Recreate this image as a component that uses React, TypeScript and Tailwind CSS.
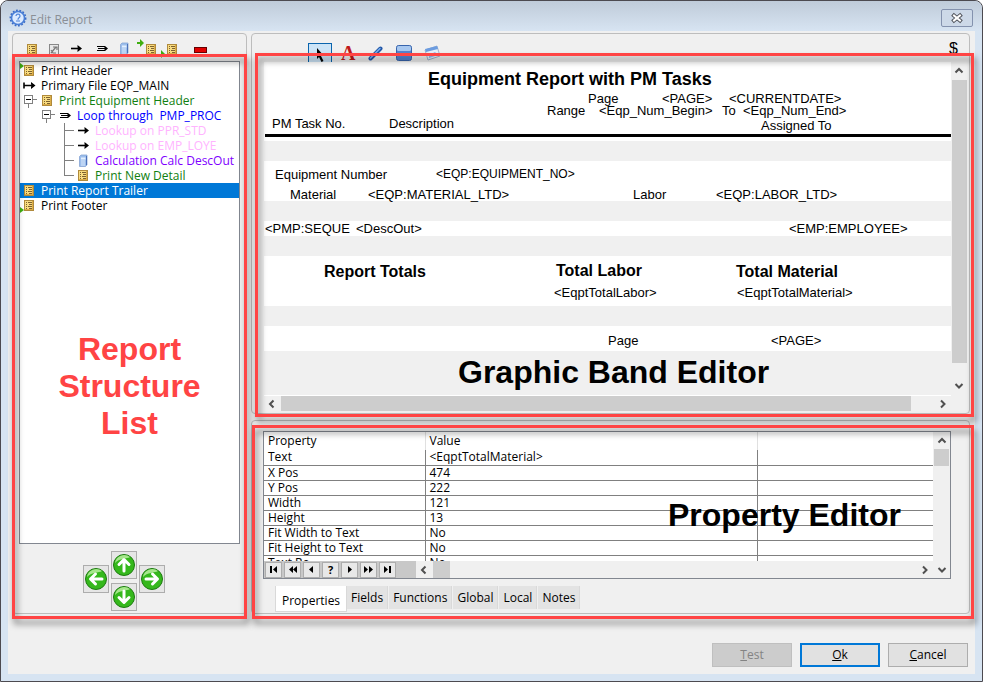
import React, { useState } from 'react';
import clsx from 'clsx';

type IconName = 'band' | 'file' | 'lookup' | 'loop' | 'calc';

interface TreeRow {
  label: string;
  icon: IconName;
  level: number;
  color?: string;
  expander?: boolean;
  last?: boolean;
  marker?: 'top' | 'bottom';
}

const treeRows: TreeRow[] = [
  { label: 'Print Header', icon: 'band', level: 0, marker: 'top' },
  { label: 'Primary File EQP_MAIN', icon: 'file', level: 0 },
  { label: 'Print Equipment Header', icon: 'band', level: 1, expander: true, color: 'text-[#108010]' },
  { label: 'Loop through  PMP_PROC', icon: 'loop', level: 2, expander: true, color: 'text-[#0000ff]' },
  { label: 'Lookup on PPR_STD', icon: 'lookup', level: 3, color: 'text-[#ffb4ff]' },
  { label: 'Lookup on EMP_LOYE', icon: 'lookup', level: 3, color: 'text-[#ffb4ff]' },
  { label: 'Calculation Calc DescOut', icon: 'calc', level: 3, color: 'text-[#8000ff]' },
  { label: 'Print New Detail', icon: 'band', level: 3, last: true, color: 'text-[#108010]' },
  { label: 'Print Report Trailer', icon: 'band', level: 0 },
  { label: 'Print Footer', icon: 'band', level: 0, marker: 'bottom' },
];

interface Band {
  height: string;
  white?: boolean;
  fields?: { text: string; place: string; style?: string }[];
}

const bands: Band[] = [
  {
    height: 'h-[79px]',
    white: true,
    fields: [
      { text: 'Equipment Report with PM Tasks', place: 'left-[164px] top-[7px]', style: 'text-lg leading-5 font-bold' },
      { text: 'Page', place: 'left-[324px] top-[29px]' },
      { text: '<PAGE>', place: 'left-[398px] top-[29px]' },
      { text: '<CURRENTDATE>', place: 'left-[465px] top-[29px]' },
      { text: 'Range', place: 'left-[283px] top-[41px]' },
      { text: '<Eqp_Num_Begin>', place: 'left-[335px] top-[41px]' },
      { text: 'To', place: 'left-[458px] top-[41px]' },
      { text: '<Eqp_Num_End>', place: 'left-[479px] top-[41px]' },
      { text: 'PM Task No.', place: 'left-[8px] top-[54px]' },
      { text: 'Description', place: 'left-[125px] top-[54px]' },
      { text: 'Assigned To', place: 'left-[497px] top-[56px]' },
    ],
  },
  { height: 'h-5' },
  {
    height: 'h-10',
    white: true,
    fields: [
      { text: 'Equipment Number', place: 'left-[11px] top-[6px]' },
      { text: '<EQP:EQUIPMENT_NO>', place: 'left-[172px] top-[5px]', style: 'text-xs leading-4' },
      { text: 'Material', place: 'left-[26px] top-[26px]' },
      { text: '<EQP:MATERIAL_LTD>', place: 'left-[104px] top-[26px]' },
      { text: 'Labor', place: 'left-[369px] top-[26px]' },
      { text: '<EQP:LABOR_LTD>', place: 'left-[452px] top-[26px]' },
    ],
  },
  { height: 'h-5' },
  {
    height: 'h-[15px]',
    white: true,
    fields: [
      { text: '<PMP:SEQUE', place: 'left-[1px] top-0' },
      { text: '<DescOut>', place: 'left-[92px] top-0' },
      { text: '<EMP:EMPLOYEE>', place: 'left-[525px] top-0' },
    ],
  },
  { height: 'h-5' },
  {
    height: 'h-[50px]',
    white: true,
    fields: [
      { text: 'Report Totals', place: 'left-[60px] top-[6px]', style: 'text-base leading-5 font-bold' },
      { text: 'Total Labor', place: 'left-[292px] top-[5px]', style: 'text-base leading-5 font-bold' },
      { text: 'Total Material', place: 'left-[472px] top-[6px]', style: 'text-base leading-5 font-bold' },
      { text: '<EqptTotalLabor>', place: 'left-[290px] top-[29px]' },
      { text: '<EqptTotalMaterial>', place: 'left-[473px] top-[29px]' },
    ],
  },
  { height: 'h-5' },
  {
    height: 'h-[25px]',
    white: true,
    fields: [
      { text: 'Page', place: 'left-[344px] top-[7px]' },
      { text: '<PAGE>', place: 'left-[507px] top-[7px]' },
    ],
  },
  { height: 'h-11' },
];

const properties = [
  ['Text', '<EqptTotalMaterial>'],
  ['X Pos', '474'],
  ['Y Pos', '222'],
  ['Width', '121'],
  ['Height', '13'],
  ['Fit Width to Text', 'No'],
  ['Fit Height to Text', 'No'],
  ['Text Ro', 'No'],
];

const tabs = ['Properties', 'Fields', 'Functions', 'Global', 'Local', 'Notes'];

const BandIcon = () => (
  <svg width="12" height="12" viewBox="0 0 12 12" shapeRendering="crispEdges">
    <rect x="1" y="0" width="10" height="11" fill="#b08a3c" />
    <rect x="2" y="1" width="8" height="9" fill="#f8dc80" />
    <path d="M9 1h1v9H9zM2 9h8v1H2z" fill="#dcae48" />
    <path d="M3 2h1v1H3zM5 2h4v1H5zM3 4h1v1H3zM6 4h3v1H6zM3 6h1v1H3zM5 6h4v1H5zM3 8h1v1H3zM6 8h3v1H6z" fill="#7c6030" />
  </svg>
);

const LookupIcon = () => (
  <svg width="13" height="9" viewBox="0 0 13 9">
    <path d="M1 4.500h9" stroke="#000" strokeWidth="1.600" />
    <path d="M7.500 1l4.500 3.500L7.500 8V5.500L9 4.500 7.500 3.500z" fill="#000" />
  </svg>
);

const FileIcon = () => (
  <svg width="13" height="9" viewBox="0 0 13 9">
    <path d="M1 4.500h9M1 1.500v6" stroke="#000" strokeWidth="1.600" />
    <path d="M8 1l4.500 3.500L8 8V5.500L9.500 4.500 8 3.500z" fill="#000" />
  </svg>
);

const LoopIcon = () => (
  <svg width="13" height="9" viewBox="0 0 13 9">
    <path d="M1 2h7M2 4h9M1 6h7" transform="translate(0 .5)" stroke="#000" strokeWidth="1" shapeRendering="crispEdges" />
    <path d="M7 2h2l3 2.500L9 7H7l2.500-2.500z" fill="#000" />
  </svg>
);

const CalcIcon = () => (
  <svg width="12" height="13" viewBox="0 0 12 13">
    <path d="M2.500 2.500L4 1h6v10l-1.500 1.500h-6z" fill="#9cbeec" stroke="#86a4d4" strokeWidth=".8" />
    <path d="M4 3.500h4.500v2H4z" fill="#e4f0ff" />
    <path d="M4 7h4M4 9h4M4 11h4" stroke="#dceafc" strokeWidth="1" />
    <path d="M9.500 2v9" stroke="#4a70b8" strokeWidth="1" />
  </svg>
);

const icons: Record<IconName, React.FC> = {
  band: BandIcon,
  file: FileIcon,
  lookup: LookupIcon,
  loop: LoopIcon,
  calc: CalcIcon,
};

const ToolBand: React.FC<{ arrow: string }> = ({ arrow }) => (
  <svg width="22" height="20" viewBox="0 0 22 20">
    <g transform="translate(8 6)">
      <BandIcon />
    </g>
    <path d={arrow} fill="#3fae10" />
  </svg>
);

const Chevron: React.FC<{ dir: 'up' | 'down' | 'left' | 'right' }> = ({ dir }) => {
  const paths = {
    up: 'M1.500 6.500L5 3l3.500 3.500',
    down: 'M1.500 3L5 6.500 8.500 3',
    left: 'M6.500 1.500L3 5l3.500 3.500',
    right: 'M3 1.500L6.500 5 3 8.500',
  };
  return (
    <svg width="10" height="10" viewBox="0 0 10 10">
      <path d={paths[dir]} fill="none" stroke="#505050" strokeWidth="2" />
    </svg>
  );
};

const MoveButton: React.FC<{ label: string; path: string }> = ({ label, path }) => (
  <button aria-label={label} className="flex h-7 w-[26px] items-center justify-center border border-[#adadad] bg-[#e6e6e6]">
    <svg width="24" height="24" viewBox="0 0 24 24" className="shrink-0">
      <circle cx="12" cy="12" r="10.500" fill="#35b81c" stroke="#1d7a10" strokeWidth="1" />
      <path d="M3 10a9.300 9.300 0 0 1 15-6c-3 2-11 1-15 6z" fill="#a6e68c" />
      <path d={path} fill="none" stroke="#fff" strokeWidth="3" strokeLinecap="round" strokeLinejoin="round" />
    </svg>
  </button>
);

const TreeItem: React.FC<{ row: TreeRow; selected: boolean; onSelect: () => void }> = ({ row, selected, onSelect }) => {
  const Icon = icons[row.icon];
  return (
    <li>
      <button
        onClick={onSelect}
        className={clsx('relative flex h-[15px] w-full items-center text-left', selected ? 'bg-[#0078d7] text-white' : row.color)}
      >
        {row.marker && (
          <svg width="4" height="6" viewBox="0 0 4 6" className={clsx('absolute left-0', row.marker === 'top' ? 'top-0' : 'bottom-0')}>
            <path d="M0 0l4 3-4 3z" fill="#3fae10" />
          </svg>
        )}
        {row.level > 1 && <span className="w-[18px] shrink-0" />}
        {row.level === 3 && <span className="w-[18px] shrink-0" />}
        {row.expander && (
          <svg width="18" height="15" viewBox="0 0 18 15" shapeRendering="crispEdges" className="shrink-0">
            <rect x="4.500" y="2.500" width="8" height="8" fill="#fff" stroke="#808080" />
            <path d="M6 6.500h5" stroke="#000" />
            <path d="M13 6.500h4M8.500 11v4" stroke="#808080" />
          </svg>
        )}
        {row.level === 3 && (
          <svg width="18" height="15" viewBox="0 0 18 15" shapeRendering="crispEdges" className="shrink-0">
            <path d={row.last ? 'M8.500 0v7M8 7.500h10' : 'M8.500 0v15M8 7.500h10'} fill="none" stroke="#808080" />
          </svg>
        )}
        <span className="flex w-[18px] shrink-0 justify-center">
          <Icon />
        </span>
        <span className="pl-[3px] leading-[15px] whitespace-pre">{row.label}</span>
      </button>
    </li>
  );
};

const Outline: React.FC<{ place: string }> = ({ place }) => (
  <div className={clsx('pointer-events-none absolute z-10 border-3 border-[#ff4444] drop-shadow-[2px_5px_3px_rgba(0,0,0,0.5)]', place)} />
);

const navIcons = [
  'M1 1h2v7H1zM8 1v7L4 4.500z',
  'M5 1v7L1 4.500zM9 1v7L5 4.500z',
  'M6 1v7L2 4.500z',
  '',
  'M3 1v7l4-3.500z',
  'M0 1v7l4-3.500zM5 1v7l4-3.500z',
  'M1 1v7l4-3.500zM6 1h2v7H6z',
];
const navLabels = ['First', 'Page back', 'Previous', 'Find', 'Next', 'Page forward', 'Last'];

const App: React.FC = () => {
  const [selected, setSelected] = useState(8);
  const [tab, setTab] = useState('Properties');

  return (
    <div className="flex min-h-screen flex-col rounded-t-lg border border-[#4c4a50] bg-[#d7e4f2] font-['Open_Sans','Noto_Sans',sans-serif] text-xs text-black">
      <header className="flex h-[30px] items-center rounded-t-lg bg-linear-to-b from-[#bfcbd9] to-[#d7e4f2] pt-1 pr-[9px] pl-2">
        <svg width="18" height="18" viewBox="0 0 18 18">
          <circle cx="9" cy="9" r="6.500" fill="#dceaff" stroke="#4a80d8" strokeWidth="1.600" />
          <circle cx="9" cy="9" r="7.700" fill="none" stroke="#3a6cc8" strokeWidth="1.500" strokeDasharray="1.800 1.600" />
          <path d="M7 7a2 2 0 1 1 3 1.800c-1 .6-1 1-1 2M7 12h4" fill="none" stroke="#4a80d8" strokeWidth="1.200" />
        </svg>
        <h1 className="pt-1 pl-[3px] leading-4 text-[#8a8f96]">Edit Report</h1>
        <button aria-label="Close" className="ml-auto flex h-[18px] w-8 items-center justify-center rounded-xs border border-[#8492ae] bg-[#cdd9e8]">
          <svg width="14" height="12" viewBox="0 0 14 12">
            <path d="M4 3.500l6 5M10 3.500l-6 5" stroke="#50545c" strokeWidth="4" strokeLinecap="square" />
            <path d="M4 3.500l6 5M10 3.500l-6 5" stroke="#fff" strokeWidth="2" strokeLinecap="square" />
          </svg>
        </button>
      </header>

      <main className="mx-[7px] mb-[7px] flex flex-1 flex-col bg-[#f0f0f0] pt-0.5 pr-[5px] pl-1">
        <div className="flex gap-1">
          <section className="relative flex w-[235px] shrink-0 flex-col rounded-sm border border-[#bdbdbd] px-1.5 pb-0.5">
            <div className="flex h-[27px] items-start pl-[7px]">
              <button aria-label="Band" className="w-[22px] pt-[10px]"><BandIcon /></button>
              <button aria-label="Formula" className="w-[22px] pt-[10px]">
                <svg width="12" height="12" viewBox="0 0 12 12">
                  <rect x="1.500" y=".5" width="9" height="11" fill="#e8e8e8" stroke="#888" />
                  <path d="M3 9l5-6M5 3h4v3M3 6l2 3h3" fill="none" stroke="#777" strokeWidth="1.200" />
                </svg>
              </button>
              <button aria-label="Lookup" className="w-[26px] pt-[10px]"><LookupIcon /></button>
              <button aria-label="Loop" className="w-[22px] pt-[10px]"><LoopIcon /></button>
              <button aria-label="Calculation" className="w-[19px] pt-[8px]"><CalcIcon /></button>
              <button aria-label="Insert before" className="w-[21px] pt-[4px]">
                <ToolBand arrow="M0 4h3V1l4 4-4 4V6H0z" />
              </button>
              <button aria-label="Insert after" className="w-[36px] pt-[4px]">
                <ToolBand arrow="M3 12l4 4-4 4z" />
              </button>
              <button aria-label="Delete" className="pt-[13px]">
                <svg width="13" height="6" viewBox="0 0 13 6" shapeRendering="crispEdges">
                  <rect width="13" height="6" fill="#600" />
                  <rect x="1" y="1" width="11" height="4" fill="#e00000" />
                </svg>
              </button>
            </div>

            <div className="flex flex-1 flex-col border border-[#828790] bg-white pt-px">
              <ul>
                {treeRows.map((row, i) => (
                  <TreeItem key={row.label} row={row} selected={i === selected} onSelect={() => setSelected(i)} />
                ))}
              </ul>
              <p className="mx-auto w-[160px] pt-[118px] text-center font-['Liberation_Sans',Arial,sans-serif] text-[32px] leading-[37px] font-bold text-[#ff4444]">
                Report Structure List
              </p>
            </div>

            <div className="flex items-start justify-center gap-0.5 pt-[7px] pr-3">
              <div className="pt-3.5">
                <MoveButton label="Move left" path="M18 12H7M11.500 7l-5 5 5 5" />
              </div>
              <div className="flex flex-col gap-1">
                <MoveButton label="Move up" path="M12 18V7M7 11.500l5-5 5 5" />
                <MoveButton label="Move down" path="M12 6v11M7 12.500l5 5 5-5" />
              </div>
              <div className="pt-3.5">
                <MoveButton label="Move right" path="M6 12h11M12.500 7l5 5-5 5" />
              </div>
            </div>
            <Outline place="-left-px -right-px top-5 -bottom-1.5" />
          </section>

          <div className="flex min-w-0 flex-1 flex-col gap-1.5">
            <section className="relative rounded-sm border border-[#bdbdbd] pr-0.5 pb-0.5 pl-3">
              <div className="flex h-7 items-start overflow-hidden pr-[9px] pl-[44px]">
                <button aria-label="Select" className="mt-[9px] flex h-6 w-6 justify-center border border-[#0a64ad] bg-[#cce4f7] pt-1">
                  <svg width="14" height="16" viewBox="0 0 14 16">
                    <path d="M4 0l7 8H8l2.500 5-2 1L6 9l-2 2z" fill="#000" />
                  </svg>
                </button>
                <button aria-label="Text" className="ml-[9px] pt-[10px] font-['Liberation_Serif',serif] text-xl leading-[18px] font-bold text-[#c01818]">A</button>
                <button aria-label="Line" className="ml-[13px] pt-[12px]">
                  <svg width="15" height="15" viewBox="0 0 15 15">
                    <path d="M2.500 12.500l10-10" stroke="#2458a8" strokeWidth="4" strokeLinecap="round" />
                    <path d="M2.500 12l9.500-9.500" stroke="#7ab0f0" strokeWidth="1.500" strokeLinecap="round" />
                  </svg>
                </button>
                <button aria-label="Box" className="ml-[13px] pt-[11px]">
                  <svg width="16" height="16" viewBox="0 0 16 16">
                    <rect x=".5" y=".5" width="15" height="15" rx="2" fill="#5484d0" stroke="#3864ac" />
                    <rect x="1" y="1" width="14" height="5" rx="1.500" fill="#a8c8f0" />
                  </svg>
                </button>
                <button aria-label="Image" className="ml-[12px] pt-[11px]">
                  <svg width="17" height="16" viewBox="0 0 17 16">
                    <path d="M1 5L13 1l3 10-12 4z" fill="#e8f0fa" stroke="#a0b4d0" />
                    <path d="M1 4L13 1l1 3L2 7z" fill="#6c9ce0" />
                    <path d="M5 10l6-3 3 3-9 3z" fill="#90b8f0" />
                  </svg>
                </button>
                <span className="ml-auto pt-[5px] font-['Liberation_Sans',Arial,sans-serif] text-base leading-5">$</span>
              </div>

              <div className="flex">
                <div className="relative min-w-0 flex-1 overflow-hidden font-['Liberation_Sans',Arial,sans-serif] text-[13px] leading-[15px]">
                  {bands.map((band, i) => (
                    <div key={i} className={clsx('relative', band.height, band.white && 'bg-white')}>
                      {band.fields?.map((field) => (
                        <span key={field.place} className={clsx('absolute whitespace-nowrap', field.place, field.style)}>
                          {field.text}
                        </span>
                      ))}
                      {i === 0 && <hr className="absolute right-0 bottom-1 left-px border-t-3 border-black" />}
                    </div>
                  ))}
                  <p className="absolute bottom-[5px] left-[194px] text-[32px] leading-9 font-bold whitespace-nowrap">Graphic Band Editor</p>
                </div>
                <div className="flex w-4 flex-col items-center">
                  <span className="flex h-[18px] items-center"><Chevron dir="up" /></span>
                  <span className="w-[15px] flex-1 bg-[#cdcdcd]" />
                  <span className="flex h-8 items-center pt-3.5"><Chevron dir="down" /></span>
                </div>
              </div>
              <div className="mr-4 flex h-4 items-center border-t border-white">
                <span className="w-[17px] pl-[3px]"><Chevron dir="left" /></span>
                <span className="h-full flex-1 bg-[#cdcdcd]" />
                <span className="w-[40px] pl-[27px]"><Chevron dir="right" /></span>
              </div>
              <Outline place="left-[3px] -right-[5px] top-[19px] -bottom-1" />
            </section>

            <section className="relative rounded-sm border border-[#bdbdbd] pt-[10px] pr-[18px] pb-px pl-[11px]">
              <div className="flex h-[148px] flex-col border border-[#828790] bg-white">
                <div className="flex min-h-0 flex-1">
                  <div className="h-[129px] min-w-0 flex-1 overflow-hidden">
                    <table className="w-full table-fixed border-collapse text-left">
                      <thead>
                        <tr className="h-[18px]">
                          <th className="w-[161px] border-r border-[#e0e0e0] p-0 pb-px pl-1 leading-4 font-normal">Property</th>
                          <th className="w-[332px] border-r border-[#e0e0e0] p-0 pb-px pl-1 leading-4 font-normal">Value</th>
                          <th className="p-0" />
                        </tr>
                      </thead>
                      <tbody>
                        {properties.map(([name, value]) => (
                          <tr key={name} className="h-[15px]">
                            <td className="border-r border-b border-[#808080] p-0 pl-1 leading-[14px]">{name}</td>
                            <td className="border-r border-b border-[#808080] p-0 pl-1 leading-[14px]">{value}</td>
                            <td className="border-b border-[#808080] p-0" />
                          </tr>
                        ))}
                      </tbody>
                    </table>
                  </div>
                  <div className="flex w-[17px] flex-col items-center bg-[#f0f0f0]">
                    <span className="flex h-[17px] items-center"><Chevron dir="up" /></span>
                    <span className="h-[17px] w-[15px] bg-[#cdcdcd]" />
                  </div>
                </div>
                <div className="flex h-[17px] items-center bg-[#f0f0f0]">
                  <div className="flex h-full w-[152px] items-center gap-[2px] bg-[#c8c8c8] pl-px">
                    {navIcons.map((path, i) => (
                      <button
                        key={navLabels[i]}
                        aria-label={navLabels[i]}
                        className="flex h-4 w-[17px] items-center justify-center border border-[#adadad] bg-[#e8e8e8] text-[11px] leading-3 font-bold"
                      >
                        {path ? (
                          <svg width="9" height="9" viewBox="0 0 9 9">
                            <path d={path} fill="#000" />
                          </svg>
                        ) : (
                          '?'
                        )}
                      </button>
                    ))}
                  </div>
                  <span className="w-[17px] pl-[3px]"><Chevron dir="left" /></span>
                  <span className="h-full w-[17px] bg-[#cdcdcd]" />
                  <span className="ml-auto pr-[7px]"><Chevron dir="right" /></span>
                  <span><Chevron dir="down" /></span>
                  <span className="w-[3px]" />
                </div>
              </div>

              <div role="tablist" className="flex items-start pt-[7px] pl-3">
                {tabs.map((name) => (
                  <button
                    key={name}
                    role="tab"
                    aria-selected={name === tab}
                    onClick={() => setTab(name)}
                    className={clsx(
                      'border-r border-[#d9d9d9] leading-4',
                      name === tab ? 'h-[26px] border-b border-l bg-white px-1.5 pt-1' : 'mr-px h-[23px] bg-[#e3e3e3] px-1'
                    )}
                  >
                    {name}
                  </button>
                ))}
              </div>
              <p className="absolute top-[76px] left-[416px] font-['Liberation_Sans',Arial,sans-serif] text-[32px] leading-9 font-bold whitespace-nowrap">
                Property Editor
              </p>
              <Outline place="left-0 -right-[5px] top-1 -bottom-1.5" />
            </section>
          </div>
        </div>

        <footer className="mt-auto flex justify-end gap-2 pr-0.5 pb-[7px]">
          <button disabled className="h-6 w-20 border border-[#bfbfbf] bg-[#cccccc] text-[#838383]">
            <u>T</u>est
          </button>
          <button className="h-6 w-20 border-2 border-[#0078d7] bg-[#e1e1e1]">
            <u>O</u>k
          </button>
          <button className="h-6 w-20 border border-[#adadad] bg-[#e1e1e1]">
            <u>C</u>ancel
          </button>
        </footer>
      </main>
    </div>
  );
};

export default App;
